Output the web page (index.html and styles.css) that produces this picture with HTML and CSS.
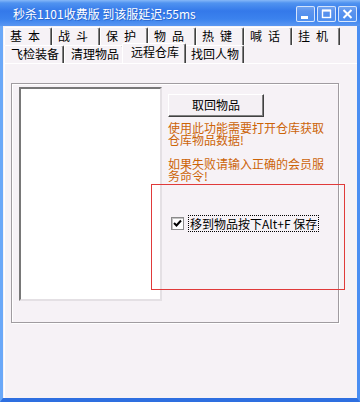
FILE: index.html
```html
<!DOCTYPE html>
<html lang="zh">
<head>
<meta charset="utf-8">
<link rel="stylesheet" href="styles.css">
</head>
<body>
<div class="window">
  <div class="titlebar">
    <span class="title">秒杀1101收费版 到该服延迟:55ms</span>
    <div class="caption">
      <span class="cbtn"><svg width="17" height="14" viewBox="0 0 17 14"><rect x="4" y="9" width="7" height="3" fill="#fff"/></svg></span>
      <span class="cbtn"><svg width="17" height="14" viewBox="0 0 17 14"><rect x="4.5" y="3.5" width="8" height="7" fill="none" stroke="#fff" stroke-width="1.4"/><rect x="4" y="2.5" width="9" height="2" fill="#fff"/></svg></span>
      <span class="cbtn"><svg width="17" height="14" viewBox="0 0 17 14"><path d="M4.5 3 L12.5 11 M12.5 3 L4.5 11" stroke="#fff" stroke-width="2"/></svg></span>
    </div>
  </div>
  <div class="client">
    <div class="tabrow row1">
      <div class="tab">基&#8194;本</div>
      <div class="tab">战&#8194;斗</div>
      <div class="tab">保&#8194;护</div>
      <div class="tab">物&#8194;品</div>
      <div class="tab">热&#8194;键</div>
      <div class="tab">喊&#8194;话</div>
      <div class="tab">挂&#8194;机</div>
    </div>
    <div class="tabrow row2">
      <div class="tab">飞检装备</div>
      <div class="tab">清理物品</div>
      <div class="tab sel">远程仓库</div>
      <div class="tab">找回人物</div>
    </div>
    <div class="panel">
      <div class="frame">
        <div class="listbox"></div>
        <div class="side">
          <div class="btn">取回物品</div>
          <p class="note">使用此功能需要打开仓库获取仓库物品数据!</p>
          <p class="note">如果失败请输入正确的会员服务命令!</p>
        </div>
        <div class="redbox">
          <div class="chk">
            <span class="box"><svg width="11" height="11" viewBox="0 0 11 11"><path d="M2 5 L4.5 7.5 L9 2.5" fill="none" stroke="#000" stroke-width="2"/></svg></span>
            <span class="lbl">移到物品按下Alt+F 保存</span>
          </div>
        </div>
      </div>
    </div>
  </div>
</div>
</body>
</html>
```
FILE: styles.css
```css
* { box-sizing: border-box; margin: 0; padding: 0; }
body {
  width: 360px;
  height: 402px;
  overflow: hidden;
  font-family: "Noto Sans CJK SC", "Noto Sans", sans-serif;
  font-size: 12px;
  background: #f6f2f6;
  color: #000;
}
.window { display: flex; flex-direction: column; width: 360px; height: 402px; }
.titlebar {
  height: 26px;
  flex: none;
  display: flex;
  align-items: center;
  padding-left: 13px;
  background: linear-gradient(#86b8f8 0, #5093f0 3px, #3479ea 11px, #3b82ee 19px, #5a97f2 26px);
  color: #fff;
}
.title { flex: 1; font-size: 12px; line-height: 14px; margin-top: 1px; text-shadow: 1px 1px 0 rgba(10, 50, 140, 0.35); }
.caption { display: flex; gap: 2px; margin-right: 3px; margin-top: 1px; }
.cbtn {
  width: 19px;
  height: 16px;
  border: 1px solid rgba(255, 255, 255, 0.75);
  border-radius: 2px;
  background: linear-gradient(rgba(255,255,255,0.25), rgba(255,255,255,0.08));
  display: flex;
  align-items: center;
  justify-content: center;
}
.client {
  flex: 1;
  display: flex;
  flex-direction: column;
  border-left: 3px solid #6aa8f8;
  border-right: 3px solid #4a8ef2;
  border-bottom: 4px solid #2e6fe0;
  padding-left: 1px;
}
.tabrow { display: flex; height: 18px; flex: none; }
.row1 { margin-top: 1px; }
.tab {
  position: relative;
  width: 48px;
  height: 18px;
  border-left: 1px solid #fff;
  border-top: 1px solid #fff;
  border-right: 1px solid #404040;
  box-shadow: inset -1px 0 0 #808080;
  border-radius: 2px 2px 0 0;
  padding-left: 5px;
  line-height: 16px;
  white-space: pre;
  background: #f6f2f6;
}
.row2 .tab { width: 60px; padding-left: 6px; }
.row2 .tab.sel {
  width: 64px;
  height: 20px;
  margin: -2px -2px 0;
  padding-left: 8px;
  z-index: 2;
}
.panel {
  flex: 1;
  border-top: 1px solid #fff;
  border-left: 1px solid #fff;
  padding: 19px 0 0 6px;
}
.frame {
  position: relative;
  width: 328px;
  height: 240px;
  border: 1px solid #a09ca0;
  box-shadow: 1px 1px 0 #fff, inset 1px 1px 0 #fff;
  display: flex;
  align-items: flex-start;
  padding: 3px 0 0 7px;
}
.listbox {
  width: 143px;
  height: 214px;
  background: #fff;
  border-left: 2px solid #787878;
  border-top: 2px solid #787878;
  border-right: 2px solid #e4e0e4;
  border-bottom: 2px solid #e4e0e4;
  flex: none;
}
.side { margin-left: 6px; padding-top: 7px; }
.btn {
  width: 96px;
  height: 23px;
  border: 1px solid;
  border-color: #fff #404040 #404040 #fff;
  box-shadow: inset -1px -1px 0 #808080;
  background: #f4f0f4;
  text-align: center;
  line-height: 20px;
}
.note { width: 158px; color: #cc6408; line-height: 12px; margin-top: 5px; }
.note + .note { margin-top: 12px; }
.redbox {
  position: absolute;
  left: 139px;
  top: 100px;
  width: 194px;
  height: 106px;
  border: 1px solid #e03a3a;
  padding: 30px 0 0 19px;
}
.chk { display: flex; align-items: center; }
.box {
  width: 13px;
  height: 13px;
  border: 1px solid #8a8a8a;
  box-shadow: inset 1px 1px 0 #c4c4c4;
  background: #fff;
  display: flex;
  align-items: center;
  justify-content: center;
}
.lbl {
  margin-left: 4px;
  height: 17px;
  border: 1px dotted #000;
  padding: 0 1px;
  line-height: 15px;
}
```
